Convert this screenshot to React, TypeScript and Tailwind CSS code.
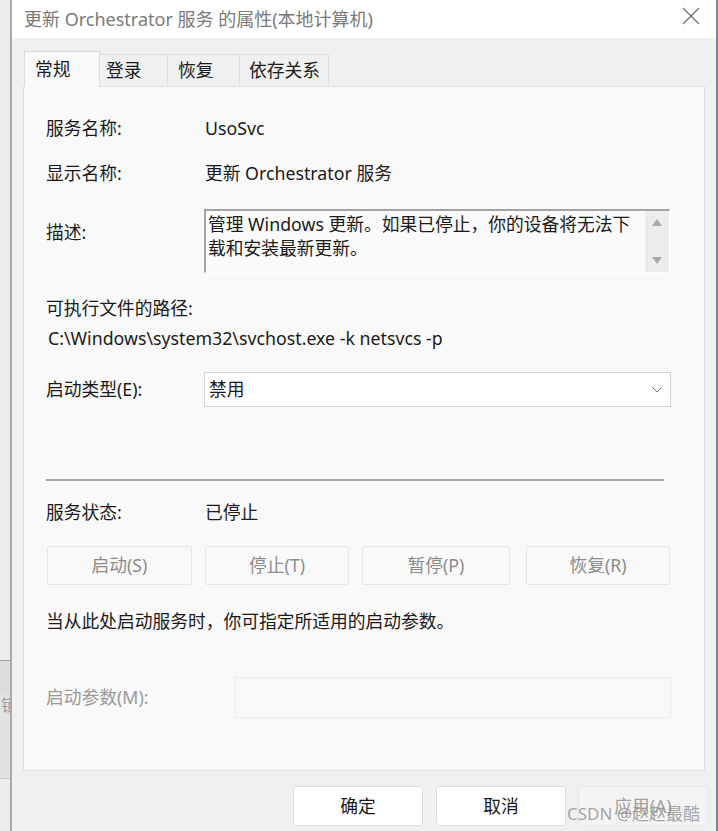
import React from "react";

const font = "font-['Noto_Sans','Noto_Sans_CJK_SC',sans-serif]";

const tabs = ["常规", "登录", "恢复", "依存关系"];

const actionButtons = [
    { label: "启动(S)", w: "w-[145px]", ml: "ml-0" },
    { label: "停止(T)", w: "w-[144px]", ml: "ml-[13px]" },
    { label: "暂停(P)", w: "w-[148px]", ml: "ml-[13px]" },
    { label: "恢复(R)", w: "w-[144px]", ml: "ml-[16px]" },
];

export default function App() {
    return (
        <div className={`w-[718px] h-[831px] flex bg-[#f0f0f0] text-[17.75px] text-[#1a1a1a] overflow-hidden ${font}`}>
            {/* window behind, left edge */}
            <div className="w-[12px] shrink-0 flex flex-col bg-[#ececec] border-r-2 border-[#a9a9a9] overflow-hidden">
                <div className="h-[660px]" />
                <div className="h-[35px] border-t border-[#9a9a9a] bg-[#dcdcdc]" />
                <div className="h-[83px] bg-[#e2e2e2] text-[16px] text-[#9a9a9a] leading-[20px] pl-[1px]">
                    <span className="block w-[9px] overflow-hidden">锁</span>
                </div>
                <div className="flex-1 border-t border-[#c8c8c8]" />
            </div>

            {/* dialog */}
            <div className="flex-1 flex flex-col">
                {/* title bar */}
                <div className="h-[38px] bg-white flex items-center pl-[12px] pr-[16px]">
                    <span className="text-[#7a7a7a] text-[18px]">更新 Orchestrator 服务 的属性(本地计算机)</span>
                    <div className="ml-auto mr-[0px] -mt-[6px]">
                        <svg width="18" height="18" viewBox="0 0 18 18">
                            <path d="M1 1L17 17M17 1L1 17" stroke="#6e6e6e" strokeWidth="1.3" />
                        </svg>
                    </div>
                </div>

                {/* tabs */}
                <div className="flex pl-[12px] pt-[13px] items-end">
                    {tabs.map((t, i) => (
                        <div
                            key={t}
                            className={
                                i === 0
                                    ? "w-[76px] h-[36px] bg-[#f9f9f9] border border-b-0 border-[#dcdcdc] pl-[10px] flex items-center -mb-px relative z-10"
                                    : i === 1
                                    ? "w-[68px] h-[32px] border-t border-r border-[#e0e0e0] pl-[6px] flex items-center"
                                    : i === 2
                                    ? "w-[72px] h-[32px] border-t border-r border-[#e0e0e0] pl-[10px] flex items-center"
                                    : "w-[89px] h-[32px] border-t border-r border-[#e0e0e0] pl-[9px] flex items-center"
                            }
                        >
                            {t}
                        </div>
                    ))}
                </div>

                {/* panel */}
                <div className="ml-[11px] w-[682px] h-[685px] bg-[#f9f9f9] border border-[#e0e0e0] pl-[22px] flex flex-col">
                    <div className="h-[34px] mt-[24px] flex items-center">
                        <span className="w-[159px]">服务名称:</span>
                        <span>UsoSvc</span>
                    </div>
                    <div className="h-[34px] mt-[11px] flex items-center">
                        <span className="w-[159px]">显示名称:</span>
                        <span>更新 Orchestrator 服务</span>
                    </div>
                    <div className="mt-[19px] flex">
                        <span className="w-[158px] mt-[10px]">描述:</span>
                        <div className="w-[466px] h-[64px] border-t-2 border-l-2 border-[#a3a3a3] border-r border-b border-r-white border-b-white bg-[#fafafa] flex">
                            <div className="flex-1 pl-[2px] pt-[1px] leading-[24px] whitespace-nowrap">
                                管理 Windows 更新。如果已停止，你的设备将无法下
                                <br />
                                载和安装最新更新。
                            </div>
                            <div className="w-[24px] bg-[#ececec] flex flex-col items-center justify-between py-[8px]">
                                <svg width="10" height="7" viewBox="0 0 10 7"><path d="M5 0L10 7H0Z" fill="#a8a8a8" /></svg>
                                <svg width="10" height="7" viewBox="0 0 10 7"><path d="M0 0H10L5 7Z" fill="#a8a8a8" /></svg>
                            </div>
                        </div>
                    </div>
                    <div className="h-[30px] mt-[20px] flex items-center">可执行文件的路径:</div>
                    <div className="h-[30px] flex items-center pl-[2px]">C:\Windows\system32\svchost.exe -k netsvcs -p</div>
                    <div className="mt-[19px] flex items-center">
                        <span className="w-[158px]">启动类型(E):</span>
                        <div className="w-[467px] h-[35px] bg-white border border-[#d4d4d4] flex items-center pl-[4px] pr-[8px]">
                            <span>禁用</span>
                            <svg className="ml-auto" width="10" height="6" viewBox="0 0 10 6">
                                <path d="M0.5 0.5L5 5L9.5 0.5" fill="none" stroke="#777" strokeWidth="1" />
                            </svg>
                        </div>
                    </div>
                    <div className="mt-[72px] w-[618px] h-[2px] bg-[#a6a6a6]" />
                    <div className="h-[34px] mt-[14px] flex items-center">
                        <span className="w-[159px]">服务状态:</span>
                        <span>已停止</span>
                    </div>
                    <div className="mt-[17px] flex pl-[1px]">
                        {actionButtons.map((b) => (
                            <div
                                key={b.label}
                                className={`${b.w} ${b.ml} h-[39px] border border-[#e6e6e6] rounded-[2px] flex items-center justify-center text-[#8c8c8c]`}
                            >
                                {b.label}
                            </div>
                        ))}
                    </div>
                    <div className="h-[34px] mt-[19px] flex items-center">当从此处启动服务时，你可指定所适用的启动参数。</div>
                    <div className="mt-[39px] flex items-center">
                        <span className="w-[189px] text-[#9a9a9a]">启动参数(M):</span>
                        <div className="w-[436px] h-[41px] border border-[#ececec] bg-[#f9f9f9]" />
                    </div>
                </div>

                {/* footer buttons */}
                <div className="relative mt-[15px] flex pl-[281px]">
                    <div className="w-[130px] h-[40px] bg-white border border-[#dcdcdc] rounded-[3px] flex items-center justify-center">确定</div>
                    <div className="ml-[13px] w-[130px] h-[40px] bg-white border border-[#dcdcdc] rounded-[3px] flex items-center justify-center">取消</div>
                    <div className="ml-[12px] w-[130px] h-[40px] bg-[#f4f4f4] border border-[#e8e8e8] rounded-[3px] flex items-center justify-center text-[#a0a0a0]">应用(A)</div>
                    <span className="absolute left-[555px] top-[15px] text-[17px] text-[#8f8f8f]/80 whitespace-nowrap">CSDN @赵赵最酷</span>
                </div>
            </div>

            {/* window behind, right edge */}
            <div className="w-[2px] shrink-0 bg-[#7e8894]" />
        </div>
    );
}
